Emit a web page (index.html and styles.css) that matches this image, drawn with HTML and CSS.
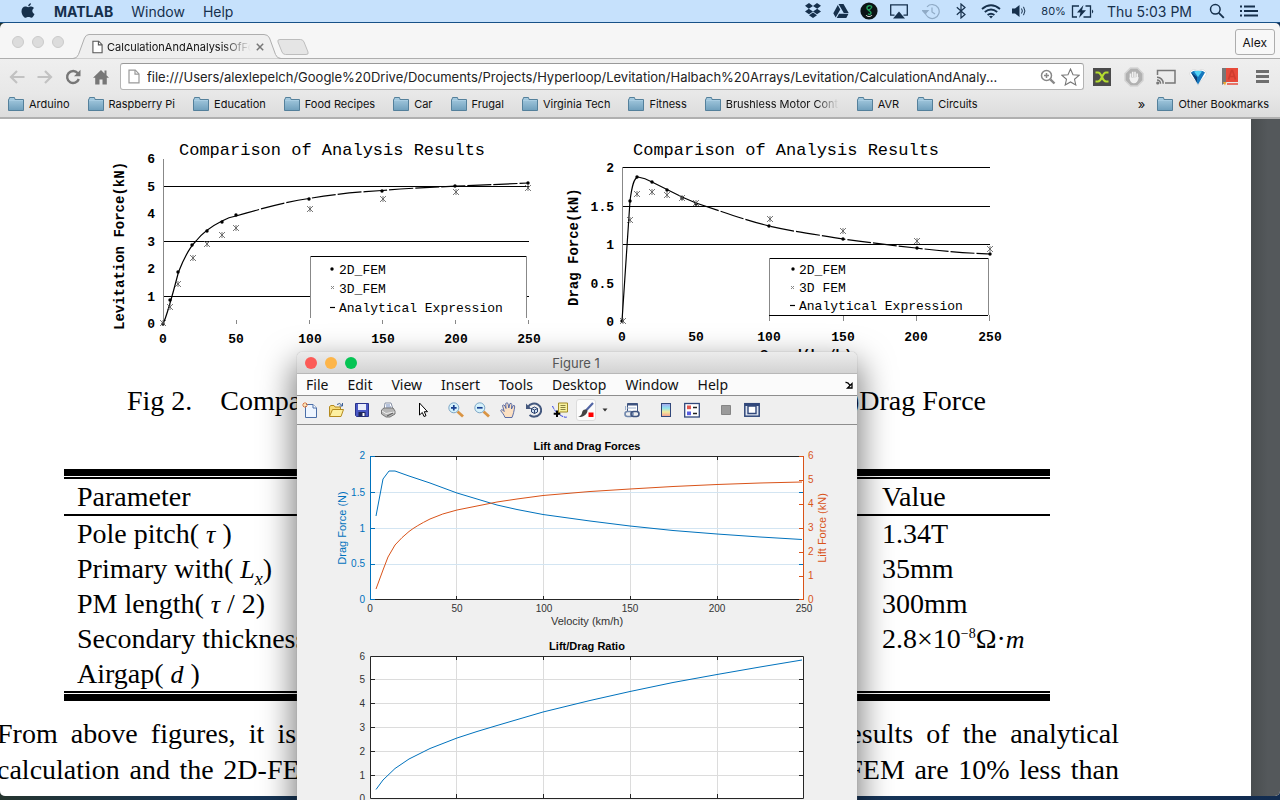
FILE: index.html
```html
<!DOCTYPE html>
<html lang="en">
<head>
<meta charset="utf-8">
<title>Desktop</title>
<link rel="stylesheet" href="styles.css">
</head>
<body>
<svg class="defs" width="0" height="0" aria-hidden="true">
  <defs>
    <linearGradient id="folderFill" x1="0" y1="0" x2="0" y2="1"><stop offset="0" stop-color="#a9cde2"/><stop offset="1" stop-color="#6f9fbc"/></linearGradient>
    <linearGradient id="rainbow" x1="0" y1="0" x2="0" y2="1"><stop offset="0" stop-color="#a9a4ee"/><stop offset=".35" stop-color="#8fe3f0"/><stop offset=".65" stop-color="#f3eb9c"/><stop offset="1" stop-color="#f39a92"/></linearGradient>
    <symbol id="folder" viewBox="0 0 16 14"><path d="M.5 2.500V13.500H15.500V2.500H7L6.500.500H1.500L1 2.500Z" fill="url(#folderFill)" stroke="#54809b"/><path d="M1 3.500H15" stroke="#a9cde2"/></symbol>
    <symbol id="sheet" viewBox="0 0 12 14"><path d="M1 .7H7.300L11 4.400V13.300H1Z" fill="#fff" stroke="currentColor" stroke-width="1.200"/><path d="M7 .7V4.700H11" fill="none" stroke="currentColor" stroke-width="1.200"/></symbol>
    <g id="dot"><circle r="1.700"/></g>
    <g id="star" stroke="#555" stroke-width=".8"><path d="M-3-3L3 3M3-3L-3 3M0-3V3"/></g>
  </defs>
</svg>

<header class="menubar">
  <nav class="menubar-menus">
    <svg class="apple" viewBox="0 0 14 16"><path d="M10 .2c.1 1.500-1.300 3-2.800 3C7 1.800 8.500.3 10 .2ZM7.300 4.200c.6 0 1.600-.8 2.900-.7 1.200.1 2.200.6 2.800 1.500-2.500 1.600-2 4.900.5 5.900-.6 1.600-1.900 3.900-3.200 3.900-1.100 0-1.500-.7-2.800-.7s-1.800.7-2.800.7C2.900 14.800.5 11.300.5 8.200c0-2.900 1.900-4.600 3.800-4.600 1.300 0 2.300.7 3 .6Z" fill="currentColor"/></svg>
    <button class="app-name">MATLAB</button>
    <button>Window</button>
    <button>Help</button>
  </nav>
  <div class="menubar-status">
    <span class="cell"><svg width="18" height="16" viewBox="0 0 18 16" fill="currentColor"><path d="M5 0 9 3 4.800 5.700 1 2.800ZM13 0 17 2.800 13.200 5.700 9 3ZM1 8.500 4.800 5.700 9 8.500 5 11.300ZM17 8.500 13.200 5.700 9 8.500 13 11.300ZM5 12.200 9 9.500 13 12.200 9 15Z"/></svg></span>
    <span class="cell"><svg width="16" height="14" viewBox="0 0 16 14" fill="currentColor"><path d="M5.500 0H10.500L15.700 9H10.800ZM4.800 1 7.300 5.500 2.700 13.500.3 9.300ZM6 9.800H15.500L13.300 14H3.700Z"/></svg></span>
    <span class="cell"><svg width="18" height="18" viewBox="0 0 18 18"><circle cx="9" cy="9" r="8.600" fill="#0b1416"/><path d="M12 5.500C11 2.500 6.500 3.500 7 6.500c.3 2 4 2.500 4 4.500 0 1.500-2 1.800-3 .8M7 6.500C8 9 12 7 11.500 4.500" fill="none" stroke="#1fa05c" stroke-width="1.400"/><path d="M6 13c1 2 5 2 6 0" stroke="#eee" fill="none"/></svg></span>
    <span class="cell wide"><svg width="18" height="15" viewBox="0 0 18 15"><path d="M4.500 11.200H.7V.8H17.300V11.200H13.500" fill="none" stroke="currentColor" stroke-width="1.300"/><path d="M9 7.500 15 14.500H3Z" fill="currentColor"/></svg></span>
    <span class="cell wide faded"><svg width="18" height="17" viewBox="0 0 18 17" fill="none" stroke="currentColor" stroke-width="1.200"><path d="M3.200 9A7 7 0 1 0 5 3.800M10 4.500V9L13 11"/><path d="M.5 7.500 3.200 10.500 6 7.500Z" fill="currentColor"/></svg></span>
    <span class="cell"><svg width="10" height="16" viewBox="0 0 10 16" fill="none" stroke="currentColor" stroke-width="1.200"><path d="M.8 4.300 9 11.500 5 15V1L9 4.500.8 11.700"/></svg></span>
    <span class="cell wide"><svg width="20" height="15" viewBox="0 0 20 15" fill="none" stroke="currentColor" stroke-width="1.900"><path d="M1 5Q10-2.500 19 5M3.800 8Q10 3 16.200 8M6.600 11Q10 8.300 13.400 11"/><path d="M8 12.300Q10 11 12 12.300L10 14.600Z" fill="currentColor" stroke="none"/></svg></span>
    <span class="cell small"><svg width="14" height="14" viewBox="0 0 14 14"><path d="M0 4.500H3L7.500 1V13L3 9.500H0Z" fill="currentColor"/><path d="M9.500 4.500Q11.200 7 9.500 9.500M11.500 2.800Q14.300 7 11.500 11.200" fill="none" stroke="currentColor"/></svg></span>
    <span class="percent">80%</span>
    <svg class="battery" width="24" height="13" viewBox="0 0 24 13"><path d="M8 1H1.500V12H6M14.500 1H19.500V12H12.500" fill="none" stroke="currentColor" stroke-width="1.300"/><path d="M12.500 0 6 7.500H9.500L8 13 15 5.300H11Z" fill="currentColor"/><path d="M21 4.500Q23.500 6.500 21 8.500Z" fill="currentColor"/></svg>
    <time class="clock">Thu 5:03 PM</time>
    <svg class="spot" width="16" height="16" viewBox="0 0 16 16" fill="none" stroke="currentColor" stroke-width="1.500"><circle cx="6.300" cy="6.300" r="4.800"/><path d="M9.800 9.800 14.800 14.800" stroke-width="1.900"/></svg>
    <svg width="18" height="12" viewBox="0 0 18 12" stroke="currentColor" stroke-width="2"><path d="M0 1.500H2M0 6H2M0 10.500H2M4 1.500H15M4 6H18M4 10.500H18"/></svg>
  </div>
</header>

<main class="desktop">
  <section class="browser">
    <div class="tabstrip">
      <div class="lights idle"><i></i><i></i><i></i></div>
      <div class="tab">
        <svg class="tab-shape" viewBox="0 0 208 25" preserveAspectRatio="none"><path d="M0 24.500Q4 24.500 5.500 20.500L11.500 4Q13 .5 16 .5H191Q195 .5 196.500 4L202.500 20.500Q204 24.500 208 24.500" fill="#efefef" stroke="#aeaeae"/></svg>
        <svg class="sheet" width="11" height="14"><use href="#sheet"/></svg>
        <span class="tab-title">CalculationAndAnalysisOfForces</span>
        <button class="tab-close" aria-label="Close tab"><svg width="8" height="8" viewBox="0 0 8 8"><path d="M.8.8 7.200 7.200M7.200.8.8 7.200" stroke="#777" stroke-width="1.500"/></svg></button>
      </div>
      <button class="new-tab" aria-label="New tab"><svg width="32" height="16" viewBox="0 0 32 16"><path d="M3 .5H23.500Q26 .5 27 3L31 13Q32 15.500 29 15.500H8.500Q6 15.500 5 13L1 3Q0 .5 3 .5Z" fill="#e5e5e5" stroke="#bdbdbd"/></svg></button>
      <button class="profile">Alex</button>
    </div>

    <div class="toolbar">
      <div class="nav">
        <button aria-label="Back"><svg width="16" height="14" viewBox="0 0 16 14" fill="none" stroke="#c2c2c2" stroke-width="2.200"><path d="M15.500 7H2M8 1 2 7 8 13"/></svg></button>
        <button aria-label="Forward"><svg width="16" height="14" viewBox="0 0 16 14" fill="none" stroke="#c2c2c2" stroke-width="2.200"><path d="M.5 7H14M8 1 14 7 8 13"/></svg></button>
        <button aria-label="Reload"><svg width="16" height="16" viewBox="0 0 16 16"><path d="M12.800 4.200A6 6 0 1 0 13.800 10" fill="none" stroke="#777" stroke-width="2.400"/><path d="M15.500.8V7.300H9Z" fill="#777"/></svg></button>
        <button aria-label="Home"><svg width="16" height="16" viewBox="0 0 16 16" fill="#777"><path d="M8 1 0 8.800H2.200V15.500H6.500V10.500H9.500V15.500H13.800V8.800H16L13.500 6.300V1.500H11.500V4.400Z"/></svg></button>
      </div>
      <div class="omnibox">
        <svg class="sheet light" width="12" height="15"><use href="#sheet"/></svg>
        <input type="text" aria-label="Address" value="file:///Users/alexlepelch/Google%20Drive/Documents/Projects/Hyperloop/Levitation/Halbach%20Arrays/Levitation/CalculationAndAnaly...">
        <svg width="16" height="16" viewBox="0 0 16 16" fill="none" stroke="#888" stroke-width="1.500"><circle cx="6.500" cy="6.500" r="5"/><path d="M6.500 4V9M4 6.500H9"/><path d="M10.300 10.300 14.500 14.500" stroke-width="2.400"/></svg>
        <svg width="19" height="18" viewBox="0 0 19 18"><path d="M9.500 1 12 6.700 18 7.300 13.500 11.300 14.800 17 9.500 14 4.200 17 5.500 11.300 1 7.300 7 6.700Z" fill="#fff" stroke="#777" stroke-width="1.100"/></svg>
      </div>
      <div class="extensions">
        <button aria-label="Extension X"><svg width="18" height="18" viewBox="0 0 18 18"><rect width="18" height="18" fill="#4b4b4b"/><path d="M2.500 4.500H5Q7 4.500 9 9 7 13.500 5 13.500H2.500M15.500 4.500H13Q11 4.500 9 9 11 13.500 13 13.500H15.500" fill="none" stroke="#b5dd2f" stroke-width="2.200"/></svg></button>
        <button aria-label="Content blocker"><svg width="20" height="20" viewBox="0 0 20 20"><path d="M6.500 1H13.500L19 6.500V13.500L13.500 19H6.500L1 13.500V6.500Z" fill="#b1b1b1" stroke="#d4d4d4" stroke-width="1.500"/><path d="M6.500 11V6.500M8.700 10V4.800M11 10V4.800M13.200 11V6.500M6 10.500Q7 15.500 10 15.500T14 10" fill="#f1f1f1" stroke="#f1f1f1" stroke-width="1.600"/></svg></button>
        <button aria-label="Cast"><svg width="20" height="16" viewBox="0 0 20 16" fill="none" stroke="#777" stroke-width="1.500"><path d="M1.500 6V1.500H19V14H9M1 8.300A6 6 0 0 1 7.200 14.700M1 11A3.500 3.500 0 0 1 4.500 14.700"/><circle cx="1.700" cy="14" r=".8"/></svg></button>
        <button aria-label="Extension V"><svg width="20" height="20" viewBox="0 0 20 20"><path d="M1.500 7C3 1 8 2 10 4.500 12 2 17 1 18.500 7 17 11 12 13 10 18.500 8 13 3 11 1.500 7Z" fill="#fff" stroke="#ddd"/><path d="M3 5.500Q6 2.500 10 4.500 14 2.500 17 5.500L10 17.500Z" fill="#1677bd"/><path d="M6 4.500Q10 3 14 4.500L10 10Z" fill="#52d2f5"/><path d="M3 5.500 9 10V15.500Z" fill="#0d3d72"/></svg></button>
        <button aria-label="Dictionary"><svg width="18" height="19" viewBox="0 0 18 19"><path d="M1 1H5V15L1 18Z" fill="#777"/><path d="M5 1H17V15H5Z" fill="#e74a3a"/><path d="M7.500 12.500 10.500 3.500H11.500L14.500 12.500M8.500 9.500H13.500" fill="none" stroke="#d03c2e" stroke-width="1.700"/><path d="M2 15H5.500L4 18.500Z" fill="#f2a52c"/><path d="M6 17H17" stroke="#e74a3a" stroke-width="1.500"/></svg></button>
        <button aria-label="Menu"><svg width="13" height="13" viewBox="0 0 13 13" stroke="#6e6e6e" stroke-width="3"><path d="M0 1.500H13M0 6.500H13M0 11.500H13"/></svg></button>
      </div>
    </div>

    <nav class="bookmarks">
      <a href="#"><svg><use href="#folder"/></svg><span>Arduino</span></a>
      <a href="#"><svg><use href="#folder"/></svg><span>Raspberry Pi</span></a>
      <a href="#"><svg><use href="#folder"/></svg><span>Education</span></a>
      <a href="#"><svg><use href="#folder"/></svg><span>Food Recipes</span></a>
      <a href="#"><svg><use href="#folder"/></svg><span>Car</span></a>
      <a href="#"><svg><use href="#folder"/></svg><span>Frugal</span></a>
      <a href="#"><svg><use href="#folder"/></svg><span>Virginia Tech</span></a>
      <a href="#"><svg><use href="#folder"/></svg><span>Fitness</span></a>
      <a href="#"><svg><use href="#folder"/></svg><span class="fade">Brushless Motor Control</span></a>
      <a href="#"><svg><use href="#folder"/></svg><span>AVR</span></a>
      <a href="#"><svg><use href="#folder"/></svg><span>Circuits</span></a>
      <button class="more" aria-label="More bookmarks">»</button>
      <a href="#"><svg><use href="#folder"/></svg><span>Other Bookmarks</span></a>
    </nav>

    <div class="viewer">
      <article class="paper">
        <div class="figures">
          <svg class="chart" width="450" height="241" viewBox="100 119 450 241">
            <text class="chart-title" x="179" y="155">Comparison of Analysis Results</text>
            <text class="axis-name" transform="translate(124 330) rotate(-90)">Levitation Force(kN)</text>
            <path class="rule" d="M163 186.500H529M163 241.500H529M163 296.500H529"/>
            <path class="axis" d="M163.500 159V324M163.500 320V324M236.500 320V324M309.500 320V324M382.500 320V324M455.500 320V324M528.500 320V324"/>
            <path class="curve" d="M163 324C167 316 172 297 178.500 272 184 258 189 248 196 241 204 231 214 225 222 221Q229 217 236 216"/>
            <path class="curve dashed" d="M236 216C260 209 285 202 309 198.500 335 194 358 192 382 190.500 420 187 490 185 528 183"/>
            <use href="#dot" x="163" y="324"/><use href="#dot" x="170" y="300"/><use href="#dot" x="178" y="272"/><use href="#dot" x="192" y="245"/><use href="#dot" x="207" y="231"/><use href="#dot" x="222" y="222"/><use href="#dot" x="236" y="215"/><use href="#dot" x="309" y="199"/><use href="#dot" x="382" y="191"/><use href="#dot" x="455" y="186"/><use href="#dot" x="528" y="183"/>
            <use href="#star" x="163" y="323"/><use href="#star" x="170" y="307"/><use href="#star" x="178" y="284"/><use href="#star" x="193" y="258"/><use href="#star" x="207" y="244"/><use href="#star" x="222" y="235"/><use href="#star" x="236" y="228"/><use href="#star" x="310" y="209"/><use href="#star" x="383" y="199"/><use href="#star" x="456" y="192"/><use href="#star" x="528" y="188"/>
            <rect x="310" y="256" width="217" height="62" fill="#fff"/>
            <path class="rule" d="M310 256.500H527"/><path class="axis" d="M310.500 256V318M526.500 256V318"/>
            <use href="#dot" x="332" y="269"/><path class="axis" d="M331 286 334 289M334 286 331 289"/><path class="curve" d="M330 307.500H335"/>
            <g class="legend"><text x="339" y="274">2D_FEM</text><text x="339" y="293">3D_FEM</text><text x="339" y="312">Analytical Expression</text></g>
            <g class="chart-label end"><text x="155" y="163">6</text><text x="155" y="191">5</text><text x="155" y="218">4</text><text x="155" y="246">3</text><text x="155" y="273">2</text><text x="155" y="301">1</text><text x="155" y="328">0</text></g>
            <g class="chart-label mid"><text x="163" y="343">0</text><text x="236" y="343">50</text><text x="310" y="343">100</text><text x="383" y="343">150</text><text x="456" y="343">200</text><text x="529" y="343">250</text></g>
          </svg>
          <svg class="chart" width="460" height="241" viewBox="550 119 460 241">
            <text class="chart-title" x="633" y="155">Comparison of Analysis Results</text>
            <text class="axis-name" transform="translate(578 306) rotate(-90)">Drag Force(kN)</text>
            <path class="rule" d="M622 167.500H990M622 206.500H990M622 244.500H990"/>
            <path class="axis" d="M622.500 167V321M769.500 315V321M843.500 315V321M916.500 315V321M989.500 315V321"/>
            <path class="curve" d="M622 321 630 201C632 185 634 178 638 177Q645 178 652 182L682 197 696 203"/>
            <path class="curve dashed" d="M696 203C720 211 745 220 769 226 795 232 820 235 843 239 865 242 880 244 916 248 940 251 965 253 990 254"/>
            <use href="#dot" x="622" y="321"/><use href="#dot" x="630" y="201"/><use href="#dot" x="637" y="177"/><use href="#dot" x="652" y="182"/><use href="#dot" x="667" y="190"/><use href="#dot" x="682" y="198"/><use href="#dot" x="696" y="204"/><use href="#dot" x="769" y="226"/><use href="#dot" x="843" y="239"/><use href="#dot" x="917" y="248"/><use href="#dot" x="990" y="254"/>
            <use href="#star" x="623" y="321"/><use href="#star" x="630" y="220"/><use href="#star" x="637" y="194"/><use href="#star" x="652" y="192"/><use href="#star" x="667" y="195"/><use href="#star" x="682" y="198"/><use href="#star" x="696" y="203"/><use href="#star" x="770" y="219"/><use href="#star" x="843" y="231"/><use href="#star" x="917" y="241"/><use href="#star" x="990" y="249"/>
            <rect x="769" y="258" width="219" height="57" fill="#fff"/>
            <path class="rule" d="M769 258.500H988M769 315.500H988"/><path class="axis" d="M769.500 258V315M988.500 258V315"/>
            <use href="#dot" x="793" y="269"/><path class="axis" d="M791 286 794 289M794 286 791 289"/><path class="curve" d="M790 305.500H795"/>
            <g class="legend"><text x="799" y="274">2D_FEM</text><text x="799" y="292">3D FEM</text><text x="799" y="310">Analytical Expression</text></g>
            <g class="chart-label end"><text x="614" y="172">2</text><text x="614" y="211">1.5</text><text x="614" y="249">1</text><text x="614" y="288">0.5</text><text x="614" y="326">0</text></g>
            <g class="chart-label mid"><text x="622" y="341">0</text><text x="696" y="341">50</text><text x="769" y="341">100</text><text x="843" y="341">150</text><text x="916" y="341">200</text><text x="990" y="341">250</text></g>
            <text class="axis-name" x="760" y="360">Speed(km/h)</text>
          </svg>
        </div>
        <p class="caption"><span>Fig 2.</span><span>Comparison of Analysis Results</span><span class="caption-end">(a)Lift Force (b)Drag Force</span></p>
        <div class="table-frame">
          <table class="params">
            <thead><tr><th class="name">Parameter</th><th>Value</th></tr></thead>
            <tbody>
              <tr><td>Pole pitch( <i>τ</i> )</td><td>1.34T</td></tr>
              <tr><td>Primary with( <i>L</i><sub>x</sub>)</td><td>35mm</td></tr>
              <tr><td>PM length( <i>τ</i> / 2)</td><td>300mm</td></tr>
              <tr><td>Secondary thickness</td><td>2.8×10<sup>−8</sup>Ω·<i>m</i></td></tr>
              <tr><td>Airgap( <i>d</i> )</td><td></td></tr>
            </tbody>
          </table>
        </div>
        <p class="prose">From above figures, it is obvious that the simulation agrees with the results of the analytical<br>calculation and the 2D-FEM agree very well, while the results of the 3D-FEM are 10% less than</p>
      </article>
    </div>
  </section>

  <section class="figure-window">
    <div class="titlebar">
      <div class="lights live"><i></i><i></i><i></i></div>
      <h1>Figure 1</h1>
    </div>
    <nav class="fig-menu">
      <button>File</button><button>Edit</button><button>View</button><button>Insert</button><button>Tools</button><button>Desktop</button><button>Window</button><button>Help</button>
      <svg class="dock" width="8" height="8" viewBox="0 0 8 8"><path d="M.5 1.500Q3 1 5 4.500M7 2.500V7H2.500Z" fill="none" stroke="#000" stroke-width="1.300"/></svg>
    </nav>
    <div class="fig-tools">
      <div class="group">
        <button aria-label="New figure"><svg viewBox="0 0 16 16"><path d="M3.500 2.500H11L14.500 6V15.500H3.500Z" fill="#eef5ff" stroke="#4a6ea8"/><path d="M11 2.500V6H14.500" fill="#fff" stroke="#4a6ea8"/><path d="M3 0V6M0 3H6M1 1 5 5M5 1 1 5" stroke="#e0763a"/><circle cx="3" cy="3" r="1.200" fill="#ffe9b0"/></svg></button>
        <button aria-label="Open"><svg viewBox="0 0 16 16"><path d="M1.500 14V4.500L3 3.500H6L7 5H12.500V7.500" fill="#f7dc7a" stroke="#b48a1e"/><path d="M1.500 14.500 4.500 7.500H15.500L13 14.500Z" fill="#fdf0a0" stroke="#b48a1e"/><path d="M9 2.500Q12 0 14 3.500M14.500 1V4H11.500" fill="none" stroke="#3b5f96"/></svg></button>
        <button aria-label="Save"><svg viewBox="0 0 16 16"><path d="M1.500 1.500H14.500V14.500H2.500L1.500 13.500Z" fill="#4a58c4" stroke="#29338c"/><path d="M4 2H12V8H4Z" fill="#e9edfb"/><path d="M4.500 10H11.500V14.500H4.500Z" fill="#21285c"/><path d="M8.500 11H10.500V14H8.500Z" fill="#fff"/></svg></button>
        <button aria-label="Print"><svg viewBox="0 0 16 16"><path d="M4 8 5 1H11L13 7Z" fill="#fff" stroke="#8791a5"/><path d="M6 3H10M6 5H11" stroke="#6c86b8"/><path d="M1.500 8 4 6H13L15 9V12L10 15H6L1.500 12Z" fill="#b6b6b6" stroke="#777"/><path d="M2 9 6 11.500 14.500 10" fill="none" stroke="#eee"/><path d="M7 14 13 11" stroke="#555"/></svg></button>
      </div>
      <div class="group">
        <button aria-label="Edit plot"><svg viewBox="0 0 16 16"><path d="M5.500 1V13L8.300 10.500 10 14.500 12 13.700 10.300 9.700H13.500Z" fill="#fff" stroke="#000"/></svg></button>
      </div>
      <div class="group">
        <button aria-label="Zoom in"><svg viewBox="0 0 16 16"><path d="M9.500 9.500 15 14.500" stroke="#d99443" stroke-width="2.800"/><circle cx="5.800" cy="5.800" r="5" fill="#d6f2fb" stroke="#7da6c6"/><path d="M5.800 3V8.600M3 5.800H8.600" stroke="#173f91" stroke-width="1.700"/></svg></button>
        <button aria-label="Zoom out"><svg viewBox="0 0 16 16"><path d="M9.500 9.500 15 14.500" stroke="#d99443" stroke-width="2.800"/><circle cx="5.800" cy="5.800" r="5" fill="#d6f2fb" stroke="#7da6c6"/><path d="M3 5.800H8.600" stroke="#173f91" stroke-width="1.700"/></svg></button>
        <button aria-label="Pan"><svg viewBox="0 0 16 16"><path d="M5 15.500C4 12.500 1.500 10 .7 8.500 1.500 7 3 8 4.200 9.500L2.500 3.500Q4 2 5 4L6 6.500 5.700 1.500Q7.200 0 8 1.500L8.800 6 10 1.500Q11.500.8 11.800 2.500L11.500 7 13.200 3.500Q15 3 14.700 5C14 9 13.500 12 12 15.500Z" fill="#fbe0c2" stroke="#4a5fa0" stroke-width=".9"/></svg></button>
        <button aria-label="Rotate 3D"><svg viewBox="0 0 16 16"><path d="M2 5A7 6.500 0 1 1 3.500 13" fill="none" stroke="#44587e" stroke-width="2"/><path d="M0 1.500V7H5.500Z" fill="#44587e"/><path d="M5.500 6.500 8.500 5 11.500 6.500V10L8.500 11.500 5.500 10ZM5.500 6.500 8.500 8 11.500 6.500M8.500 8V11.500" fill="#cfe0f3" stroke="#2d4470"/></svg></button>
        <button aria-label="Data cursor"><svg viewBox="0 0 16 16"><path d="M6.500 1H15.500V10H8L6.500 11Z" fill="#f8f3a0" stroke="#a18b25"/><path d="M8.500 3.500H13.500M8.500 5.500H13.500M8.500 7.500H13.500" stroke="#8a8440"/><path d="M.5 4Q3 10 8 13T15 15" fill="none" stroke="#2b3be0" stroke-dasharray="3 1"/><path d="M5 8.500V15M1.700 11.700H8.300" stroke="#000" stroke-width="2"/></svg></button>
        <button class="pressed" aria-label="Brush"><svg viewBox="0 0 16 16"><path d="M15 1 8 8.500" stroke="#5265a4" stroke-width="2.200"/><path d="M8.500 7.500C5 7 4 9.500 4 11 3.500 13 2 14.500 0 15 4 15.500 8.500 13.500 9.500 9Z" fill="#444"/><path d="M10.500 10.500H15.500V15H10.500Z" fill="#f00"/></svg></button>
        <button class="drop" aria-label="Brush colors"><svg viewBox="0 0 6 4"><path d="M.5.500H5.500L3 3.500Z" fill="#333"/></svg></button>
      </div>
      <div class="group">
        <button aria-label="Link plot"><svg viewBox="0 0 16 16"><path d="M3.500 1.500H13.500V9.500H3.500Z" fill="#fff" stroke="#3f5480"/><path d="M3.500 2.500H13.500" stroke="#3f5480" stroke-width="2"/><path d="M1.500 4V8M3 6H12" stroke="#9db2d0"/><rect x="1" y="9.500" width="8" height="5" rx="2.500" fill="none" stroke="#7188ad" stroke-width="1.600"/><rect x="7" y="9.500" width="8" height="5" rx="2.500" fill="none" stroke="#3f5480" stroke-width="1.600"/></svg></button>
      </div>
      <div class="group">
        <button aria-label="Insert colorbar"><svg viewBox="0 0 16 16"><rect x="3.500" y="1.500" width="9" height="13" fill="url(#rainbow)" stroke="#31487b"/></svg></button>
        <button aria-label="Insert legend"><svg viewBox="0 0 16 16"><rect x=".7" y="1.500" width="14.600" height="13.500" fill="#fff" stroke="#31487b" stroke-width="1.300"/><path d="M3 3.500H7V7.200H3Z" fill="#e4574f"/><path d="M3 9.500H7V13.200H3Z" fill="#5a5fe0"/><path d="M9 5.500H13M9 11.500H13" stroke="#222" stroke-width="1.300"/></svg></button>
      </div>
      <div class="group">
        <button aria-label="Hide plot tools"><svg viewBox="0 0 16 16"><path d="M3.500 3.500H12.500V12.500H3.500Z" fill="#9a9a9a" stroke="#858585"/></svg></button>
        <button aria-label="Show plot tools"><svg viewBox="0 0 16 16"><rect x=".8" y="1.700" width="14.400" height="12.500" fill="#dfe6f2" stroke="#31487b" stroke-width="1.500"/><path d="M4 4H12V11.500H4Z" fill="#fff" stroke="#31487b" stroke-width="1.400"/><path d="M1 3H15" stroke="#31487b" stroke-width="2"/></svg></button>
      </div>
    </div>
    <svg class="plots" width="560" height="390" viewBox="297 425 560 390">
      <rect x="370" y="456" width="434" height="144" fill="#fff"/>
      <path class="grid" d="M456.500 457V599M543.500 457V599M630.500 457V599M717.500 457V599"/>
      <path class="grid blue" d="M371 492.500H803M371 528.500H803M371 564.500H803"/>
      <path class="box" d="M370 456.500H804M370 599.500H804M456.500 456V460M543.500 456V460M630.500 456V460M717.500 456V460M456.500 600V596M543.500 600V596M630.500 600V596M717.500 600V596"/>
      <path class="blue-line" d="M370.500 456V600M370 456.500H375M370 492.500H375M370 528.500H375M370 564.500H375M370 599.500H375M799 492.500H803M799 528.500H803M799 564.500H803"/>
      <path class="red-line" d="M803.500 456V600M799 456.500H804M799 480.500H804M799 504.500H804M799 528.500H804M799 552.500H804M799 576.500H804M799 599.500H804"/>
      <path class="blue-line" d="M376 516 383 479 389 471H395L409 476 430 483 457 493 477 499 497 505 517 509.500 543 514.500 590 521 630 526 673 530.500 717 534 760 537 802 539.500"/>
      <path class="red-line" d="M376 589 383 570 388 557 395 545Q402 537 409 531.500T430 519Q442 513.500 457 510L477 506 497 502 517 499 543 495.500 590 491.500 630 489 673 486.500 717 484.500 760 483 802 482"/>
      <g class="plot-title"><text x="587" y="450">Lift and Drag Forces</text><text x="587" y="650">Lift/Drag Ratio</text></g>
      <g class="tick blue end"><text x="365" y="459">2</text><text x="365" y="496">1.5</text><text x="365" y="532">1</text><text x="365" y="567">0.5</text><text x="365" y="603">0</text></g>
      <g class="tick red"><text x="808" y="459">6</text><text x="808" y="483">5</text><text x="808" y="507">4</text><text x="808" y="531">3</text><text x="808" y="555">2</text><text x="808" y="579">1</text><text x="808" y="603">0</text></g>
      <g class="tick mid"><text x="370" y="612">0</text><text x="457" y="612">50</text><text x="544" y="612">100</text><text x="630" y="612">150</text><text x="717" y="612">200</text><text x="804" y="612">250</text></g>
      <text class="plot-axis mid" x="587" y="625">Velocity (km/h)</text>
      <text class="plot-axis blue mid" transform="translate(346 528) rotate(-90)">Drag Force (N)</text>
      <text class="plot-axis red mid" transform="translate(826 528) rotate(-90)">Lift Force (kN)</text>
      <rect x="370" y="656" width="434" height="143" fill="#fff"/>
      <path class="grid" d="M456.500 657V798M543.500 657V798M630.500 657V798M717.500 657V798M371 679.500H803M371 703.500H803M371 727.500H803M371 751.500H803M371 775.500H803"/>
      <path class="box" d="M370.500 656.500H803.500V798.500H370.500ZM456.500 656V660M543.500 656V660M630.500 656V660M717.500 656V660M456.500 799V794M543.500 799V794M630.500 799V794M717.500 799V794M370 679.500H375M370 703.500H375M370 727.500H375M370 751.500H375M370 775.500H375M799 679.500H804M799 703.500H804M799 727.500H804M799 751.500H804M799 775.500H804"/>
      <path class="blue-line" d="M376 789.500 383 780 395 768.500 409 759 430 748.500 457 738 477 731.500 497 725.500 543 712 590 700.500 630 691.500 673 682.500 717 674.500 760 667 802 660"/>
      <g class="tick end"><text x="365" y="660">6</text><text x="365" y="683">5</text><text x="365" y="707">4</text><text x="365" y="731">3</text><text x="365" y="755">2</text><text x="365" y="779">1</text><text x="365" y="802">0</text></g>
    </svg>
  </section>
</main>
</body>
</html>
```

FILE: styles.css
```css
* { box-sizing: border-box; }

body {
  margin: 0;
  height: 100vh;
  display: flex;
  flex-direction: column;
  overflow: hidden;
  background: linear-gradient(90deg, #25352f, #173555 15%, #17375a 60%, #122c50);
  font-family: Inter, "Liberation Sans", sans-serif;
  color: #111;
}

button {
  margin: 0;
  padding: 0;
  border: 0;
  background: none;
  font: inherit;
  color: inherit;
  display: inline-flex;
  align-items: center;
  justify-content: center;
}

.defs { position: absolute; }

/* System menu bar */
.menubar {
  flex: none;
  display: flex;
  justify-content: space-between;
  align-items: center;
  height: 23px;
  padding: 0 22px 0 21px;
  background: #c6e1fc;
  border-bottom: 1px solid #185187;
  color: #16304c;
  font-size: 14px;
}
.menubar-menus { display: flex; align-items: center; gap: 18px; }
.apple { width: 14px; height: 16px; }
.app-name { margin-left: 1px; font-weight: 700; }
.menubar-status { display: flex; align-items: center; }
.cell { width: 28px; display: flex; justify-content: center; }
.cell.wide { width: 32px; }
.cell.small { width: 24px; }
.faded { opacity: .3; }
.percent { margin-left: 10px; font-size: 11px; }
.battery { margin: 0 12px 0 5px; }
.spot { margin: 0 15px 0 17px; }

/* Desktop and windows */
.desktop {
  flex: 1;
  min-height: 0;
  display: flex;
  flex-direction: column;
}
.lights { display: flex; gap: 8px; }
.lights i { width: 12px; height: 12px; border-radius: 50%; }
.idle i { background: #dcdcdc; border: 1px solid #cbcbcb; }
.live i:nth-child(1) { background: #fc5b57; }
.live i:nth-child(2) { background: #fdb549; }
.live i:nth-child(3) { background: #05c454; }

.browser {
  flex: 1;
  min-height: 0;
  display: flex;
  flex-direction: column;
  margin-bottom: 4px;
  border-radius: 5px;
  overflow: hidden;
  background: #f6f6f6;
}

.tabstrip {
  flex: none;
  display: flex;
  align-items: flex-end;
  height: 36px;
  padding: 3px 5px 0 12px;
  border-bottom: 1px solid #aeaeae;
}
.tabstrip .lights { align-self: center; }
.tab {
  position: relative;
  display: flex;
  align-items: center;
  width: 208px;
  height: 25px;
  margin: 0 -4px -1px 9px;
  padding: 0 17px 0 19px;
}
.tab-shape { position: absolute; inset: 0; width: 100%; height: 100%; }
.sheet { flex: none; position: relative; color: #555; }
.sheet.light { color: #999; }
.tab-title {
  position: relative;
  flex: 1;
  margin: 0 5px 0 4px;
  overflow: hidden;
  white-space: nowrap;
  font-size: 11px;
  mask-image: linear-gradient(90deg, #000 80%, transparent);
}
.tab-close { position: relative; }
.new-tab { margin-bottom: 3px; }
.profile {
  align-self: center;
  height: 26px;
  margin-left: auto;
  padding: 0 7px;
  border: 1px solid #adadad;
  border-radius: 3px;
  background: #f8f8f8;
  font-size: 12px;
}

.toolbar {
  flex: none;
  display: flex;
  align-items: center;
  height: 34px;
  padding: 1px 2px 0 3px;
  background: linear-gradient(#efefef, #e8e8e8);
}
.nav { display: flex; width: 117px; }
.nav button { width: 28px; height: 26px; }
.omnibox {
  flex: 1;
  display: flex;
  align-items: center;
  gap: 5px;
  height: 27px;
  padding: 0 3px 0 7px;
  background: #fff;
  border: 1px solid #b4b4b4;
  border-top-color: #999;
  border-radius: 3px;
}
.omnibox input {
  flex: 1;
  min-width: 0;
  margin-left: 2px;
  padding: 0;
  border: 0;
  outline: 0;
  background: none;
  font: 13px Inter, "Liberation Sans", sans-serif;
  color: #222;
}
.extensions { display: flex; margin-left: 2px; }
.extensions button { width: 32px; height: 26px; }

.bookmarks {
  flex: none;
  display: flex;
  align-items: center;
  gap: 18px;
  height: 26px;
  padding: 0 11px 2px 8px;
  background: linear-gradient(#e8e8e8, #dcdcdc);
  border-bottom: 2px solid #b0b0b0;
  font-size: 11px;
}
.bookmarks a {
  display: flex;
  align-items: center;
  gap: 5px;
  color: #111;
  text-decoration: none;
  white-space: nowrap;
}
.bookmarks svg { width: 16px; height: 14px; }
.bookmarks .fade {
  width: 113px;
  overflow: hidden;
  mask-image: linear-gradient(90deg, #000 80%, transparent);
}
.bookmarks .more { margin: 0 -6px 0 auto; font-size: 13px; }

/* Document */
.viewer {
  flex: 1;
  min-height: 0;
  padding-right: 29px;
  overflow: hidden;
  background: linear-gradient(270deg, #54585b 12px, #4a4e50 28px);
}
.paper {
  height: 100%;
  overflow: hidden;
  background: #fff;
  color: #000;
  font: 28px/36px "Liberation Serif", serif;
}
.figures { display: flex; padding-left: 100px; }
.chart { flex: none; font-family: "Liberation Mono", monospace; }
.chart-title { font-size: 17px; }
.legend { font-size: 13px; }
.chart-label { font-size: 13px; font-weight: 700; }
.axis-name { font-size: 14px; font-weight: 700; }
.rule { fill: none; stroke: #000; }
.axis { fill: none; stroke: #888; }
.curve { fill: none; stroke: #000; stroke-width: 1.2; }
.dashed { stroke-dasharray: 24 2; }
.end { text-anchor: end; }
.mid { text-anchor: middle; }

.caption {
  display: flex;
  gap: 28px;
  margin: 23px 265px 50px 127px;
  white-space: nowrap;
}
.caption-end { margin-left: auto; }

.table-frame {
  margin: 0 201px 0 64px;
  padding: 1px 0;
  border: solid #000;
  border-width: 7px 0;
}
.params {
  width: 100%;
  border: solid #000;
  border-width: 2px 0;
  border-spacing: 0;
  line-height: 35px;
  text-align: left;
}
.params th, .params td { height: 35px; padding: 0 0 0 13px; }
.params th { height: 37px; border-bottom: 2px solid #000; font-weight: 400; }
.params .name { width: 805px; }
.params i { font-size: 26px; line-height: 0; }
.params sub, .params sup { line-height: 0; }
.params sub { font-size: 18px; font-style: italic; }
.params sup { font-size: 14px; }

.prose {
  margin: 15px 132px 0 -3px;
  text-align: justify;
  text-align-last: justify;
}

/* Figure window */
.figure-window {
  position: absolute;
  left: 297px;
  top: 352px;
  width: 560px;
  border-radius: 5px 5px 0 0;
  background: #f0f0f0;
  box-shadow: 0 0 1px #888, 0 14px 32px 4px rgba(0, 0, 0, .5);
}
.titlebar {
  display: flex;
  align-items: center;
  height: 22px;
  padding: 0 8px;
  border-bottom: 1px solid #b8b8b8;
  border-radius: 5px 5px 0 0;
  background: linear-gradient(#ececec, #d3d3d3);
}
.titlebar h1 {
  flex: 1;
  margin: 0 54px 0 0;
  font-size: 13px;
  font-weight: 400;
  text-align: center;
  color: #555;
}
.fig-menu {
  display: flex;
  align-items: center;
  gap: 19px;
  height: 22px;
  padding: 0 4px 0 9px;
  background: #fbfbfb;
  border-bottom: 1px solid #8e8e8e;
  font: 14px/20px "Noto Sans", sans-serif;
}
.dock { margin-left: auto; }
.fig-tools {
  display: flex;
  align-items: center;
  gap: 8px;
  height: 29px;
  background: #efefef;
  border-bottom: 1px solid #8e8e8e;
}
.group { display: flex; align-items: center; }
.group button { width: 26px; height: 22px; }
.group svg { width: 16px; height: 16px; flex: none; }
.group .pressed {
  width: 20px;
  margin: 0 3px;
  border: 1px solid #ddd;
  border-radius: 3px;
  background: #fcfcfc;
}
.group .drop { width: 12px; }
.group .drop svg { width: 6px; height: 4px; }

.plots { display: block; font-family: "Liberation Sans", sans-serif; }
.grid { fill: none; stroke: #dcdcdc; }
.grid.blue { stroke: #d3e5f2; }
.box { fill: none; stroke: #262626; }
.blue-line { fill: none; stroke: #0072bd; }
.red-line { fill: none; stroke: #d95319; }
.plot-title { font-size: 11px; font-weight: 700; text-anchor: middle; }
.tick { font-size: 10px; fill: #333; }
.plot-axis { font-size: 11px; fill: #333; }
text.blue, .tick.blue { fill: #0072bd; }
text.red, .tick.red { fill: #d95319; }
```
